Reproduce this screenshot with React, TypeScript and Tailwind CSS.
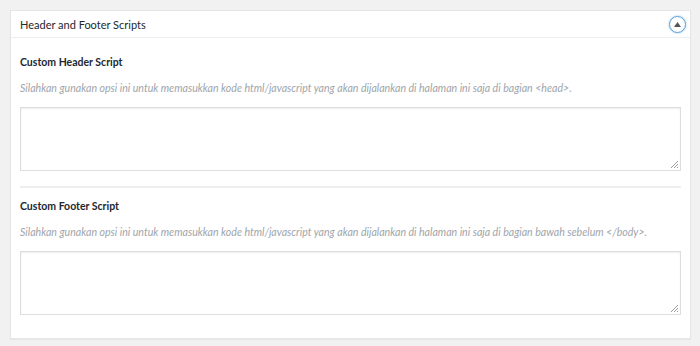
import React from "react";

const font = { fontFamily: 'Lato, "Noto Sans", sans-serif' };

function Field({ title, desc }: { title: string; desc: string }) {
  return (
    <div className="flex flex-col">
      <div className="text-[10.5px] font-bold leading-[18px] text-[#23282d]">{title}</div>
      <div className="mt-[9px] whitespace-nowrap text-[10.6px] italic leading-[16px] text-[#a0a5aa]">{desc}</div>
      <div className="relative mt-[11px] h-[64px] w-full border border-[#dddddd] bg-white shadow-[inset_0_1px_2px_rgba(0,0,0,0.07)]">
        <svg className="absolute bottom-[1px] right-[1px]" width="9" height="9" viewBox="0 0 9 9">
          <path d="M8 1L1 8M8 4L4 8M8 7L7 8" stroke="#9a9a9a" strokeWidth="1" />
        </svg>
      </div>
    </div>
  );
}

export default function App() {
  return (
    <div className="h-[346px] w-[700px] bg-[#f1f1f1] pt-[10px] pl-[10px]" style={font}>
      <div className="w-[681px] border border-[#e5e5e5] bg-white shadow-[0_1px_1px_rgba(0,0,0,0.04)]">
        <div className="flex h-[27px] items-center justify-between border-b border-[#eeeeee] pl-[9px] pr-[4px]">
          <span className="pt-[1px] text-[11px] leading-[18px] text-[#23282d]">Header and Footer Scripts</span>
          <div className="flex h-[17px] w-[17px] items-center justify-center rounded-full border border-[#5b9dd9] shadow-[0_0_2px_rgba(30,140,190,0.6)]">
            <svg width="7" height="5" viewBox="0 0 7 5">
              <path d="M3.5 0L7 5H0Z" fill="#555" />
            </svg>
          </div>
        </div>
        <div className="flex flex-col px-[9px] pt-[15px] pb-[23px]">
          <Field
            title="Custom Header Script"
            desc="Silahkan gunakan opsi ini untuk memasukkan kode html/javascript yang akan dijalankan di halaman ini saja di bagian <head>."
          />
          <div className="mt-[15px] mb-[9px] h-[2px] w-full bg-[#eeeeee]" />
          <Field
            title="Custom Footer Script"
            desc="Silahkan gunakan opsi ini untuk memasukkan kode html/javascript yang akan dijalankan di halaman ini saja di bagian bawah sebelum </body>."
          />
        </div>
      </div>
    </div>
  );
}
